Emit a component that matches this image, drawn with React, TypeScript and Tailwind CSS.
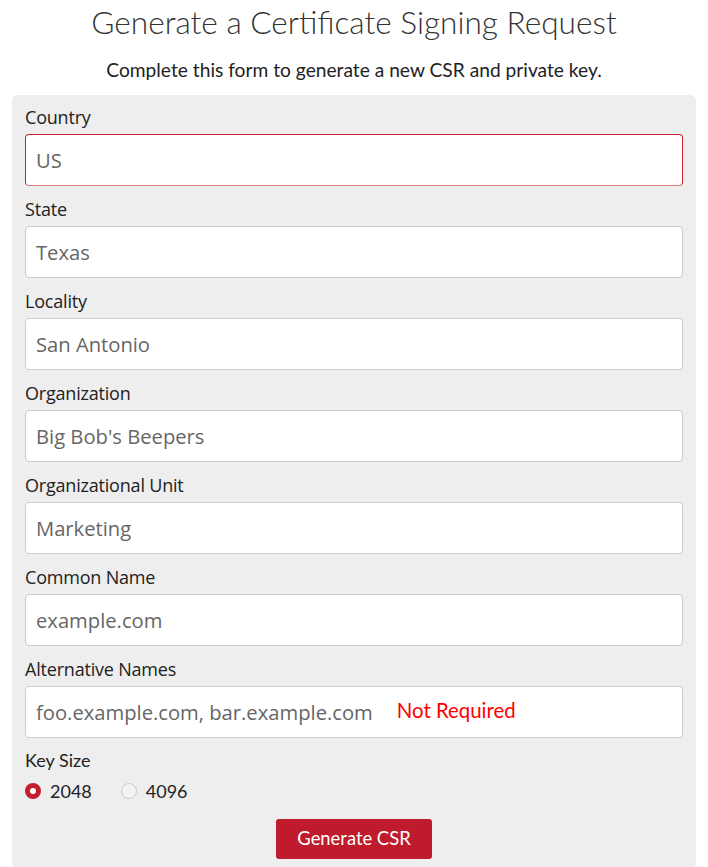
import React, { useState } from 'react';

const fields = [
  { label: 'Country', value: 'US', invalid: true },
  { label: 'State', value: 'Texas' },
  { label: 'Locality', value: 'San Antonio' },
  { label: 'Organization', value: "Big Bob's Beepers" },
  { label: 'Organizational Unit', value: 'Marketing' },
  { label: 'Common Name', value: 'example.com' },
];

const Radio = ({ checked, label, onClick }: { checked: boolean; label: string; onClick: () => void }) => (
  <label className="flex items-center cursor-pointer" onClick={onClick}>
    {checked ? (
      <span className="w-4 h-4 rounded-full bg-[#c41e2e] flex items-center justify-center">
        <span className="w-[6px] h-[6px] rounded-full bg-white" />
      </span>
    ) : (
      <span className="w-4 h-4 rounded-full border border-[#ccc] bg-[#f2f2f2]" />
    )}
    <span className="ml-[9px] text-[18px] leading-6 text-[#222]">{label}</span>
  </label>
);

export default function App() {
  const [keySize, setKeySize] = useState('2048');

  return (
    <div className="min-h-screen bg-white font-['Lato',sans-serif] text-[#222]">
      <h1 className="pt-[2px] text-center text-[31.6px] leading-10 font-light text-[#333]">
        Generate a Certificate Signing Request
      </h1>
      <p className="mt-[16px] text-center text-[19.2px] leading-6">
        Complete this form to generate a new CSR and private key.
      </p>

      <div className="mx-3 mt-[13px] rounded-[6px] bg-[#eee] px-[13px] pt-[10px] pb-[10px]">
        {fields.map((f) => (
          <div key={f.label} className="mb-[11px]">
            <div className="h-6 leading-6 text-[18px] font-['Open_Sans',sans-serif] text-[#222] tracking-[-0.2px]">
              {f.label}
            </div>
            <div
              className={`mt-[5px] h-[52px] rounded-[4px] border bg-white flex items-center pl-[10px] font-['Open_Sans',sans-serif] text-[20.2px] text-[#666] ${
                f.invalid ? 'border-[#d0202f] border-b-[#dc7a82]' : 'border-[#ccc]'
              }`}
            >
              {f.value}
            </div>
          </div>
        ))}

        <div className="mb-[10px]">
          <div className="h-6 leading-6 text-[18px] font-['Open_Sans',sans-serif] text-[#222] tracking-[-0.2px]">
            Alternative Names
          </div>
          <div className="mt-[5px] h-[52px] rounded-[4px] border border-[#ccc] bg-white flex items-center pl-[10px]">
            <span className="font-['Open_Sans',sans-serif] text-[20.2px] text-[#666]">foo.example.com, bar.example.com</span>
            <span className="ml-6 -mt-[4px] text-[20.4px] text-[#ff0000]">Not Required</span>
          </div>
        </div>

        <div className="h-6 leading-6 text-[18px] text-[#222]">Key Size</div>
        <div className="mt-[7px] flex items-center gap-[29px]">
          <Radio checked={keySize === '2048'} label="2048" onClick={() => setKeySize('2048')} />
          <Radio checked={keySize === '4096'} label="4096" onClick={() => setKeySize('4096')} />
        </div>

        <div className="mt-[16px] flex justify-center">
          <button className="h-10 w-[156px] rounded-[3px] bg-[#c01b2c] text-white text-[18.4px]">
            Generate CSR
          </button>
        </div>
      </div>
    </div>
  );
}
